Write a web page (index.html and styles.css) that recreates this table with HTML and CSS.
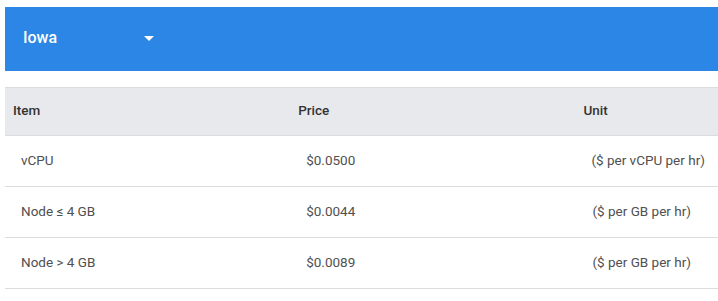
FILE: index.html
```html
<!DOCTYPE html>
<html>
<head>
<meta charset="utf-8">
<link rel="stylesheet" href="styles.css">
</head>
<body>
<div class="page">
  <div class="region-bar">
    <div class="select">
      <span class="select-label">Iowa</span>
      <svg class="select-arrow" width="10" height="5" viewBox="0 0 10 5"><path d="M0 0 L10 0 L5 5 Z" fill="#ffffff"/></svg>
    </div>
  </div>
  <table class="pricing">
    <thead>
      <tr>
        <th class="col-item">Item</th>
        <th class="col-price">Price</th>
        <th class="col-unit">Unit</th>
      </tr>
    </thead>
    <tbody>
      <tr>
        <td>vCPU</td>
        <td>$0.0500</td>
        <td class="unit">($ per vCPU per hr)</td>
      </tr>
      <tr>
        <td>Node ≤ 4 GB</td>
        <td>$0.0044</td>
        <td class="unit">($ per GB per hr)</td>
      </tr>
      <tr>
        <td>Node &gt; 4 GB</td>
        <td>$0.0089</td>
        <td class="unit">($ per GB per hr)</td>
      </tr>
    </tbody>
  </table>
</div>
</body>
</html>
```

FILE: styles.css
```css
html, body {
  margin: 0;
  padding: 0;
  background: #ffffff;
}
body {
  font-family: Roboto, "Liberation Sans", Arial, sans-serif;
  color: #3c4043;
}
.page {
  padding: 7px 0 0 5px;
}
.region-bar {
  background: #2b86e5;
  height: 64px;
  box-sizing: border-box;
  display: flex;
  align-items: center;
  padding-left: 18px;
  padding-bottom: 3px;
}
.select {
  display: flex;
  align-items: center;
  width: 131px;
  justify-content: space-between;
  color: #ffffff;
}
.select-label {
  font-size: 16px;
  font-weight: 500;
}
.select-arrow {
  display: block;
  margin-top: 1px;
}
.pricing {
  margin-top: 16px;
  width: 100%;
  table-layout: fixed;
  border-collapse: collapse;
  font-size: 13.5px;
}
.pricing th {
  background: #e8e9ed;
  text-align: left;
  font-weight: 500;
  color: #333333;
  height: 48px;
  box-sizing: border-box;
  padding: 0 8px 3px;
  border-top: 1px solid #dadce0;
  border-bottom: 1px solid #dadce0;
}
.col-item { width: 40%; }
.col-price { width: 40%; }
.col-unit { width: 20%; }
.pricing td {
  height: 51px;
  box-sizing: border-box;
  padding: 0 16px 3px;
  border-bottom: 1px solid #dadce0;
  color: #505050;
  white-space: nowrap;
}
.pricing td.unit {
  text-align: right;
  padding-right: 27px;
  overflow: visible;
}
```
